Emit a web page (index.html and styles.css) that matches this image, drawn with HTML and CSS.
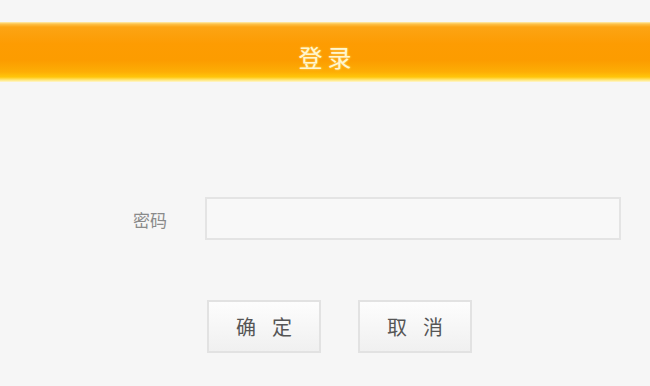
FILE: index.html
```
<!DOCTYPE html>
<html lang="zh-CN">
<head>
    <meta charset="UTF-8">
    <meta name="viewport" content="width=device-width, initial-scale=1.0">
    <title>登录</title>
    <link rel="stylesheet" href="styles.css">
</head>
<body>
    <div class="header">
        <h1 class="title">登录</h1>
    </div>
    <form class="login-form">
        <div class="form-row">
            <label class="form-label" for="senha">密码</label>
            <input class="form-input" type="password" id="senha">
        </div>
        <div class="form-actions">
            <button type="button" class="btn btn-ok">确定</button>
            <button type="button" class="btn btn-cancel">取消</button>
        </div>
    </form>
</body>
</html>
```

FILE: styles.css
```
* {
    box-sizing: border-box;
    margin: 0;
    padding: 0;
}

body {
    font-family: "Liberation Sans", "Noto Sans CJK SC", sans-serif;
    background-color: #f6f6f6;
    color: #555;
    width: 650px;
    height: 386px;
    overflow: hidden;
}

.header {
    margin-top: 22px;
    height: 60px;
    padding-top: 8px;
    display: flex;
    justify-content: center;
    align-items: center;
    background: linear-gradient(to bottom,
        #ffeeb0 0px,
        #fdc24a 2px,
        #fca414 5px,
        #fd9c02 22px,
        #fc9c00 38px,
        #fdae05 50px,
        #ffc60a 55px,
        #ffe77a 58px,
        #fff6d0 60px);
}

.title {
    font-size: 24px;
    font-weight: normal;
    letter-spacing: 5px;
    margin-left: 5px;
    color: #fff6cf;
    text-shadow: 0 0 2px rgba(255, 240, 160, 0.8);
}

.login-form {
    padding-top: 115px;
}

.form-row {
    display: flex;
    align-items: center;
    padding-left: 133px;
}

.form-label {
    width: 72px;
    font-size: 17px;
    color: #8a8a8a;
    padding-top: 2px;
}

.form-input {
    width: 416px;
    height: 43px;
    border: 2px solid #e4e4e4;
    background-color: #f8f8f8;
    outline: none;
}

.form-actions {
    display: flex;
    gap: 37px;
    padding-left: 207px;
    margin-top: 60px;
}

.btn {
    width: 114px;
    height: 53px;
    font-family: "Noto Sans CJK SC", sans-serif;
    font-size: 20px;
    letter-spacing: 16px;
    text-indent: 16px;
    color: #555;
    background: linear-gradient(to bottom, #fdfdfd, #f0f0f0);
    border: 2px solid #e2e2e2;
    cursor: pointer;
}
```
